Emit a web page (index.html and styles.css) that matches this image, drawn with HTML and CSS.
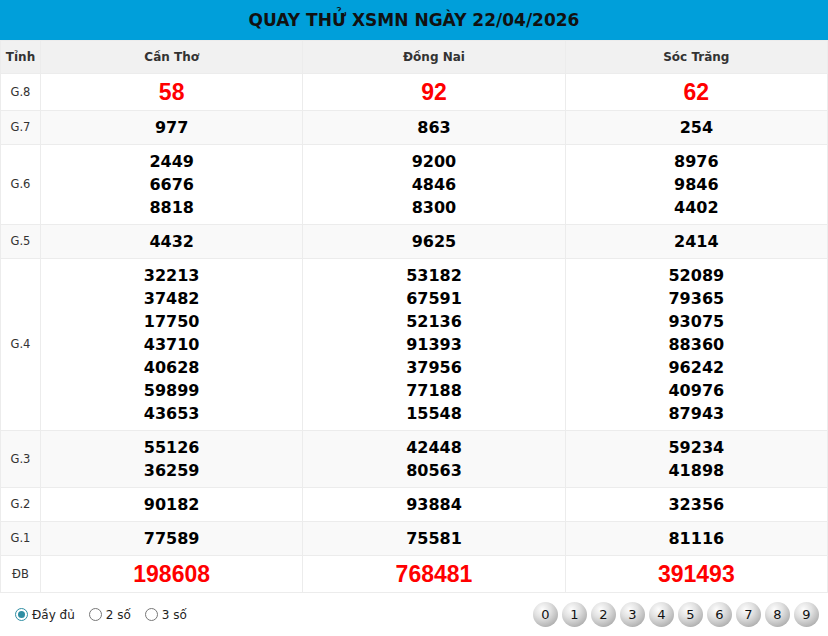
FILE: index.html
```html
<!DOCTYPE html>
<html lang="vi">
<head>
<meta charset="utf-8">
<title>Quay thử XSMN</title>
<link rel="stylesheet" href="styles.css">
</head>
<body>
<div class="page">
  <h1 class="title">QUAY THỬ XSMN NGÀY 22/04/2026</h1>
  <table class="kq">
    <colgroup>
      <col class="c-label">
      <col class="c-prov">
      <col class="c-prov">
      <col class="c-prov">
    </colgroup>
    <thead>
      <tr><th>Tỉnh</th><th>Cần Thơ</th><th>Đồng Nai</th><th>Sóc Trăng</th></tr>
    </thead>
    <tbody>
      <tr class="big"><td class="lbl">G.8</td><td class="red">58</td><td class="red">92</td><td class="red">62</td></tr>
      <tr><td class="lbl">G.7</td><td>977</td><td>863</td><td>254</td></tr>
      <tr><td class="lbl">G.6</td><td>2449<br>6676<br>8818</td><td>9200<br>4846<br>8300</td><td>8976<br>9846<br>4402</td></tr>
      <tr><td class="lbl">G.5</td><td>4432</td><td>9625</td><td>2414</td></tr>
      <tr><td class="lbl">G.4</td>
        <td>32213<br>37482<br>17750<br>43710<br>40628<br>59899<br>43653</td>
        <td>53182<br>67591<br>52136<br>91393<br>37956<br>77188<br>15548</td>
        <td>52089<br>79365<br>93075<br>88360<br>96242<br>40976<br>87943</td></tr>
      <tr><td class="lbl">G.3</td><td>55126<br>36259</td><td>42448<br>80563</td><td>59234<br>41898</td></tr>
      <tr><td class="lbl">G.2</td><td>90182</td><td>93884</td><td>32356</td></tr>
      <tr><td class="lbl">G.1</td><td>77589</td><td>75581</td><td>81116</td></tr>
      <tr class="big"><td class="lbl">ĐB</td><td class="red">198608</td><td class="red">768481</td><td class="red">391493</td></tr>
    </tbody>
  </table>
  <div class="footer">
    <div class="opts">
      <label class="opt"><span class="radio on"></span>Đầy đủ</label>
      <label class="opt"><span class="radio"></span>2 số</label>
      <label class="opt"><span class="radio"></span>3 số</label>
    </div>
    <div class="balls">
      <span class="ball">0</span><span class="ball">1</span><span class="ball">2</span><span class="ball">3</span><span class="ball">4</span><span class="ball">5</span><span class="ball">6</span><span class="ball">7</span><span class="ball">8</span><span class="ball">9</span>
    </div>
  </div>
</div>
</body>
</html>
```
FILE: styles.css
```css
html, body {
  margin: 0;
  padding: 0;
  background: #fff;
}
body {
  font-family: "DejaVu Sans", Verdana, sans-serif;
  color: #111;
}
.page {
  width: 828px;
}
.title {
  margin: 0;
  height: 40px;
  line-height: 40px;
  background: #009fda;
  color: #111;
  text-align: center;
  font-size: 17px;
  font-weight: bold;
}
.kq {
  width: 828px;
  border-collapse: collapse;
  table-layout: fixed;
}
.c-label { width: 40px; }
.kq th, .kq td {
  border: 1px solid #ececec;
  text-align: center;
  vertical-align: middle;
  padding: 5px 0;
}
.kq th {
  background: #f1f1f1;
  font-size: 12px;
  font-weight: bold;
  color: #333;
  height: 22px;
}
.kq td {
  font-size: 16px;
  font-weight: bold;
  line-height: 23px;
  color: #000;
}
.kq tbody tr:nth-child(even) td {
  background: #f9f9f9;
}
.kq td.lbl {
  font-size: 11.5px;
  font-weight: normal;
  color: #333;
}
.kq tr.big td {
  line-height: 26px;
}
.kq td.red {
  font-family: "Liberation Sans", Arial, sans-serif;
  font-size: 23px;
  color: #ff0000;
}
.footer {
  display: flex;
  justify-content: space-between;
  align-items: center;
  padding: 9px 9px 0 15px;
}
.opts {
  display: flex;
  gap: 14px;
  align-items: center;
}
.opt {
  display: flex;
  align-items: center;
  gap: 4px;
  font-size: 12px;
  color: #222;
}
.radio {
  width: 11px;
  height: 11px;
  border: 1px solid #777;
  border-radius: 50%;
  background: #fff;
  position: relative;
}
.radio.on {
  border-color: #2f8ea3;
}
.radio.on::after {
  content: "";
  position: absolute;
  left: 2px;
  top: 2px;
  width: 7px;
  height: 7px;
  border-radius: 50%;
  background: #2f8ea3;
}
.balls {
  display: flex;
  gap: 4px;
}
.ball {
  width: 25px;
  height: 25px;
  border-radius: 50%;
  background: radial-gradient(circle at 38% 30%, #fdfdfd 0%, #e2e2e2 35%, #b9b9b9 70%, #8f8f8f 100%);
  display: flex;
  align-items: center;
  justify-content: center;
  font-size: 13px;
  color: #111;
}
```
